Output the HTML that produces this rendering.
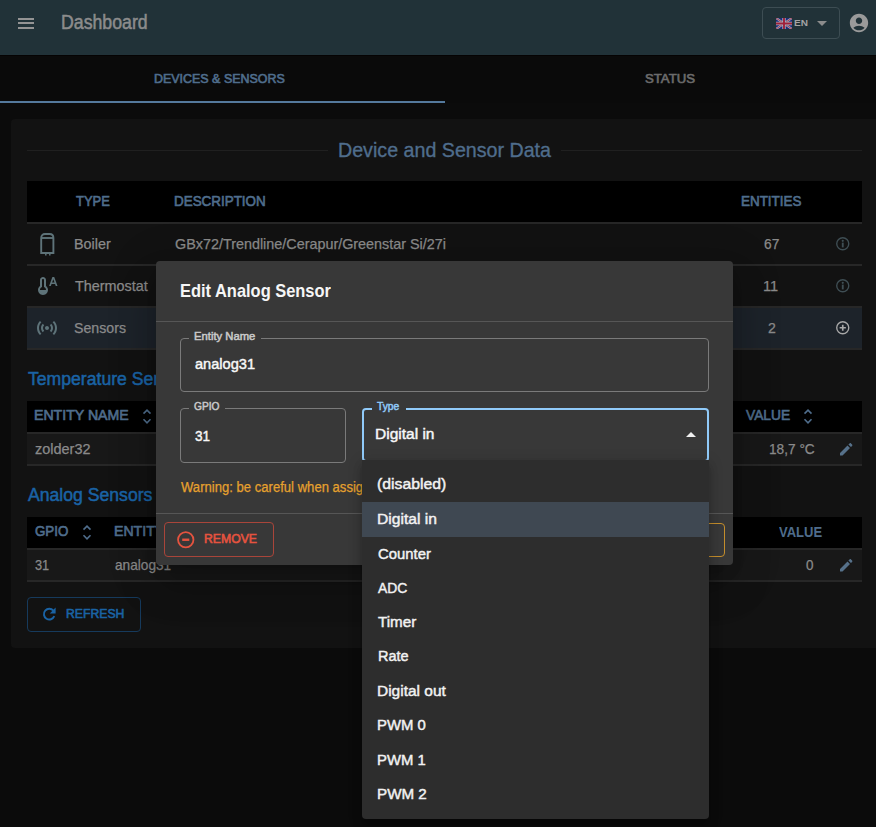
<!DOCTYPE html>
<html><head><meta charset="utf-8">
<style>
*{box-sizing:border-box;margin:0;padding:0}
html,body{width:876px;height:827px;overflow:hidden;background:#0b0b0b;font-family:"Liberation Sans",sans-serif;}
.abs{position:absolute}
.t{position:absolute;white-space:nowrap;line-height:1;transform-origin:0 0}
svg{position:absolute;overflow:visible}
</style></head><body>
<!-- header -->
<div class="abs" style="left:0;top:0;width:876px;height:55px;background:#213238"></div>
<div class="abs" style="left:18px;top:17.5px;width:16.4px;height:2px;background:#949494"></div>
<div class="abs" style="left:18px;top:22px;width:16.4px;height:2px;background:#949494"></div>
<div class="abs" style="left:18px;top:26.5px;width:16.4px;height:2px;background:#949494"></div>
<span class="t" style="left:60.69px;top:13px;font-size:19.5px;color:#8c8c8c;-webkit-text-stroke:0.5px currentColor;transform:scaleX(0.9085)">Dashboard</span>
<div class="abs" style="left:762px;top:7px;width:78px;height:32px;border:1px solid #3d4d53;border-radius:4px"></div>
<svg style="left:776px;top:18px;overflow:hidden" width="16" height="11" viewBox="0 0 16 11">
  <rect width="16" height="11" fill="#1b2a78"/>
  <path d="M0 0L16 11M16 0L0 11" stroke="#a9adbd" stroke-width="2.2"/>
  <path d="M0 0L16 11M16 0L0 11" stroke="#a0203a" stroke-width="0.8"/>
  <path d="M8 0V11M0 5.5H16" stroke="#a9adbd" stroke-width="3.4"/>
  <path d="M8 0V11M0 5.5H16" stroke="#a0203a" stroke-width="1.9"/>
</svg>
<span class="t" style="left:794.27px;top:18px;font-size:9.8px;color:#a4a4a4;font-weight:bold;transform:scaleX(1.0250)">EN</span>
<svg style="left:816.5px;top:21px" width="10" height="5" viewBox="0 0 10 5"><path d="M0 0H10L5 5Z" fill="#8c8c8c"/></svg>
<svg style="left:848px;top:12px" width="22" height="22" viewBox="0 0 24 24"><path fill="#9a9a9a" d="M12 2C6.48 2 2 6.48 2 12s4.48 10 10 10 10-4.48 10-10S17.52 2 12 2zm0 4c1.93 0 3.5 1.57 3.5 3.5S13.93 13 12 13s-3.5-1.57-3.5-3.5S10.07 6 12 6zm0 14c-2.03 0-4.43-.82-6.14-2.88C7.55 15.8 9.68 15 12 15s4.45.8 6.14 2.12C16.43 19.18 14.03 20 12 20z"/></svg>

<!-- tabs -->
<div class="abs" style="left:0;top:55px;width:876px;height:48px;background:#0a0a0a"></div>
<div class="abs" style="left:0;top:55px;width:876px;height:1px;background:#050303"></div>
<span class="t" style="left:154.04px;top:72px;font-size:13px;color:#4f6d8c;-webkit-text-stroke:0.65px currentColor;transform:scaleX(0.9578)">DEVICES &amp; SENSORS</span>
<span class="t" style="left:644.50px;top:72px;font-size:13px;color:#6b6b6b;-webkit-text-stroke:0.65px currentColor;transform:scaleX(1.0122)">STATUS</span>
<div class="abs" style="left:0;top:101px;width:445px;height:2px;background:#54799c"></div>

<!-- card -->
<div class="abs" style="left:11px;top:119px;width:880px;height:529px;background:#121212;border-radius:4px"></div>
<div class="abs" style="left:27px;top:150px;width:300.5px;height:1px;background:#202020"></div>
<div class="abs" style="left:561px;top:150px;width:301px;height:1px;background:#202020"></div>
<span class="t" style="left:337.53px;top:140px;font-size:20.3px;color:#4f6d8c;-webkit-text-stroke:0.35px currentColor;transform:scaleX(0.9689)">Device and Sensor Data</span>

<!-- device table -->
<div class="abs" style="left:27px;top:181px;width:835px;height:41px;background:#000"></div>
<div class="abs" style="left:27px;top:222px;width:835px;height:2px;background:#272727"></div>
<span class="t" style="left:75.60px;top:194px;font-size:14.5px;color:#4f6d8c;-webkit-text-stroke:0.65px currentColor;transform:scaleX(0.8921)">TYPE</span><span class="t" style="left:174.07px;top:194px;font-size:14.5px;color:#4f6d8c;-webkit-text-stroke:0.65px currentColor;transform:scaleX(0.9258)">DESCRIPTION</span><span class="t" style="left:741.37px;top:194px;font-size:14.5px;color:#4f6d8c;-webkit-text-stroke:0.65px currentColor;transform:scaleX(0.9266)">ENTITIES</span>
<span class="t" style="left:74.11px;top:237px;font-size:14.5px;color:#8a8a8a;-webkit-text-stroke:0.25px currentColor;transform:scaleX(0.9889)">Boiler</span><span class="t" style="left:175.00px;top:237px;font-size:14.5px;color:#8a8a8a;-webkit-text-stroke:0.25px currentColor;transform:scaleX(0.9908)">GBx72/Trendline/Cerapur/Greenstar Si/27i</span><span class="t" style="left:764.30px;top:237px;font-size:14.5px;color:#8a8a8a;-webkit-text-stroke:0.25px currentColor;transform:scaleX(0.9500)">67</span>
<div class="abs" style="left:27px;top:264px;width:835px;height:2px;background:#272727"></div>
<span class="t" style="left:75.40px;top:279px;font-size:14.5px;color:#8a8a8a;-webkit-text-stroke:0.25px currentColor;transform:scaleX(0.9919)">Thermostat</span><span class="t" style="left:763.49px;top:279px;font-size:14.5px;color:#8a8a8a;-webkit-text-stroke:0.25px currentColor;transform:scaleX(1.0071)">11</span>
<div class="abs" style="left:27px;top:306px;width:835px;height:1.5px;background:#272727"></div>
<div class="abs" style="left:27px;top:307.5px;width:835px;height:40.5px;background:#1d232a"></div>
<span class="t" style="left:74.42px;top:321px;font-size:14.5px;color:#8a8a8a;-webkit-text-stroke:0.25px currentColor;transform:scaleX(0.9769)">Sensors</span><span class="t" style="left:768.20px;top:321px;font-size:14.5px;color:#8a8a8a;-webkit-text-stroke:0.25px currentColor;transform:scaleX(0.9750)">2</span>
<div class="abs" style="left:27px;top:348px;width:835px;height:1.5px;background:#272727"></div>
<!-- device icons -->
<svg style="left:39.5px;top:232.5px" width="15" height="23" viewBox="0 0 15 23">
  <path d="M1.2 20V5C1.2 2.6 2.7 1 5 1H9.6C11.9 1 13.4 2.6 13.4 5V20Z" fill="none" stroke="#5e7379" stroke-width="1.9"/>
  <path d="M1.2 5H13.4" stroke="#5e7379" stroke-width="1.9"/>
  <path d="M5.8 20V22.5M9.8 20V22.5" stroke="#5e7379" stroke-width="1.5"/>
</svg>
<svg style="left:35px;top:274px" width="24" height="24" viewBox="0 0 24 24"><path fill="#5e7379" d="M11 12V6c0-1.66-1.34-3-3-3S5 4.34 5 6v6c-1.21.91-2 2.37-2 4 0 1.12.38 2.14 1 2.97V19h.02c.91 1.21 2.35 2 3.98 2s3.06-.79 3.98-2H12v-.03c.62-.83 1-1.85 1-2.97 0-1.63-.79-3.09-2-4zm-6 4c0-.94.45-1.84 1.2-2.4L7 13V6c0-.55.45-1 1-1s1 .45 1 1v7l.8.6c.75.57 1.2 1.46 1.2 2.4H5zM18.62 3h-1.24L14.1 12h1.73l.73-2h3.48l.73 2h1.73l-3.28-9zm-1.52 5.5 1.21-3.33 1.21 3.33H17.1z"/></svg>
<svg style="left:35px;top:316px" width="24" height="24" viewBox="0 0 24 24"><path fill="#5e7379" d="M7.76 16.24C6.67 15.16 6 13.66 6 12s.67-3.16 1.76-4.24l1.42 1.42C8.45 9.9 8 10.9 8 12c0 1.1.45 2.1 1.17 2.83l-1.41 1.41zm8.48 0C17.33 15.16 18 13.66 18 12s-.67-3.16-1.760-4.24l-1.42 1.42C15.55 9.9 16 10.9 16 12c0 1.1-.45 2.1-1.17 2.830l1.41 1.41zM12 10c-1.1 0-2 .9-2 2s.9 2 2 2 2-.9 2-2-.9-2-2-2zm8 2c0 2.21-.9 4.21-2.35 5.65l1.42 1.42C20.88 17.26 22 14.76 22 12s-1.12-5.26-2.93-7.07l-1.42 1.42C19.1 7.79 20 9.79 20 12zM6.35 6.35L4.93 4.93C3.12 6.74 2 9.24 2 12s1.12 5.26 2.93 7.07l1.42-1.42C4.9 16.21 4 14.21 4 12s.9-4.21 2.35-5.65z"/></svg>
<svg style="left:836px;top:237.2px" width="13.5" height="13.5" viewBox="0 0 13 13"><circle cx="6.5" cy="6.5" r="5.8" fill="none" stroke="#3f4e54" stroke-width="1.3"/><path d="M6.5 5.4V10" stroke="#3f4e54" stroke-width="1.8"/><circle cx="6.5" cy="3.7" r="1.05" fill="#3f4e54"/></svg>
<svg style="left:836px;top:279.2px" width="13.5" height="13.5" viewBox="0 0 13 13"><circle cx="6.5" cy="6.5" r="5.8" fill="none" stroke="#3f4e54" stroke-width="1.3"/><path d="M6.5 5.4V10" stroke="#3f4e54" stroke-width="1.8"/><circle cx="6.5" cy="3.7" r="1.05" fill="#3f4e54"/></svg>
<svg style="left:836px;top:321.3px" width="13.5" height="13.5" viewBox="0 0 13 13"><circle cx="6.5" cy="6.5" r="5.8" fill="none" stroke="#a8a8a8" stroke-width="1.3"/><path d="M6.5 3.5V9.5M3.5 6.5H9.5" stroke="#a8a8a8" stroke-width="1.6"/></svg>

<!-- temperature sensors -->
<span class="t" style="left:27.70px;top:371px;font-size:17.5px;color:#1a63a5;-webkit-text-stroke:0.5px currentColor;transform:scaleX(1.0065)">Temperature Sensors</span>
<div class="abs" style="left:27px;top:401px;width:835px;height:31px;background:#000"></div>
<div class="abs" style="left:27px;top:432px;width:835px;height:1.5px;background:#272727"></div>
<div class="abs" style="left:27px;top:433.5px;width:835px;height:30.5px;background:#181818"></div>
<div class="abs" style="left:27px;top:464px;width:835px;height:1.5px;background:#272727"></div>
<span class="t" style="left:34.40px;top:408px;font-size:14.2px;color:#4f6d8c;-webkit-text-stroke:0.65px currentColor;transform:scaleX(0.9957)">ENTITY NAME</span><span class="t" style="left:746.10px;top:408px;font-size:14.2px;color:#4f6d8c;-webkit-text-stroke:0.65px currentColor;transform:scaleX(0.9689)">VALUE</span><span class="t" style="left:35.00px;top:442px;font-size:14.5px;color:#8a8a8a;-webkit-text-stroke:0.25px currentColor;transform:scaleX(0.9982)">zolder32</span><span class="t" style="left:769.16px;top:442px;font-size:14.5px;color:#8a8a8a;-webkit-text-stroke:0.25px currentColor;transform:scaleX(0.9426)">18,7 °C</span>
<svg style="left:143px;top:409px" width="8" height="15" viewBox="0 0 8 15"><path d="M0.5 4.6L4 1.1L7.5 4.6M0.5 10.3L4 13.8L7.5 10.3" fill="none" stroke="#4f6d8c" stroke-width="1.6"/></svg>
<svg style="left:804px;top:409px" width="8" height="15" viewBox="0 0 8 15"><path d="M0.5 4.6L4 1.1L7.5 4.6M0.5 10.3L4 13.8L7.5 10.3" fill="none" stroke="#4f6d8c" stroke-width="1.6"/></svg>
<svg style="left:840px;top:443px" width="12.5" height="12.5" viewBox="0 0 12.5 12.5"><path d="M0 10V12.5H2.5L10 5L7.5 2.5Z M8.4 1.6L9.6 0.4C10 0 10.6 0 11 0.4L12.1 1.5C12.5 1.9 12.5 2.5 12.1 2.9L10.9 4.1Z" fill="#56718a"/></svg>

<!-- analog sensors -->
<span class="t" style="left:27.70px;top:487px;font-size:17.5px;color:#1a63a5;-webkit-text-stroke:0.5px currentColor;transform:scaleX(1.0065)">Analog Sensors</span>
<div class="abs" style="left:27px;top:517px;width:835px;height:31px;background:#000"></div>
<div class="abs" style="left:27px;top:548px;width:835px;height:1.5px;background:#272727"></div>
<div class="abs" style="left:27px;top:549.5px;width:835px;height:30.5px;background:#181818"></div>
<div class="abs" style="left:27px;top:580px;width:835px;height:1.5px;background:#272727"></div>
<span class="t" style="left:35.40px;top:524px;font-size:14.2px;color:#4f6d8c;-webkit-text-stroke:0.65px currentColor;transform:scaleX(0.9400)">GPIO</span><span class="t" style="left:114.40px;top:524px;font-size:14.2px;color:#4f6d8c;-webkit-text-stroke:0.65px currentColor;transform:scaleX(0.9957)">ENTITY</span><span class="t" style="left:778.90px;top:525px;font-size:14.2px;color:#4f6d8c;font-weight:bold;transform:scaleX(0.9170)">VALUE</span><span class="t" style="left:35.40px;top:558px;font-size:14.5px;color:#8a8a8a;-webkit-text-stroke:0.25px currentColor;transform:scaleX(0.8813)">31</span><span class="t" style="left:115.40px;top:558px;font-size:14.5px;color:#8a8a8a;-webkit-text-stroke:0.25px currentColor;transform:scaleX(0.9422)">analog31</span><span class="t" style="left:806.20px;top:558px;font-size:14.5px;color:#8a8a8a;-webkit-text-stroke:0.25px currentColor;transform:scaleX(0.9250)">0</span>
<svg style="left:83px;top:525px" width="8" height="15" viewBox="0 0 8 15"><path d="M0.5 4.6L4 1.1L7.5 4.6M0.5 10.3L4 13.8L7.5 10.3" fill="none" stroke="#4f6d8c" stroke-width="1.6"/></svg>
<svg style="left:840px;top:559px" width="12.5" height="12.5" viewBox="0 0 12.5 12.5"><path d="M0 10V12.5H2.5L10 5L7.5 2.5Z M8.4 1.6L9.6 0.4C10 0 10.6 0 11 0.4L12.1 1.5C12.5 1.9 12.5 2.5 12.1 2.9L10.9 4.1Z" fill="#56718a"/></svg>

<!-- refresh -->
<div class="abs" style="left:27px;top:597px;width:114px;height:35px;border:1px solid #163a5c;border-radius:4px"></div>
<svg style="left:42px;top:607px" width="14" height="14" viewBox="0 0 14 14"><path d="M11.4 3.6A5.4 5.4 0 1 0 12.3 9.2" fill="none" stroke="#1a63a5" stroke-width="1.9"/><path d="M13.6 0.6V6.4H7.8Z" fill="#1a63a5"/></svg>
<span class="t" style="left:66.28px;top:607px;font-size:13.3px;color:#1a63a5;-webkit-text-stroke:0.65px currentColor;transform:scaleX(0.9194)">REFRESH</span>

<!-- dialog -->
<div class="abs" style="left:156px;top:261px;width:577px;height:304px;background:#383838;border-radius:4px;box-shadow:0 11px 15px -7px rgba(0,0,0,0.2),0 24px 38px 3px rgba(0,0,0,0.14),0 9px 46px 8px rgba(0,0,0,0.12)"></div>
<span class="t" style="left:179.81px;top:282px;font-size:18.5px;color:#f6f6f6;font-weight:bold;transform:scaleX(0.8882)">Edit Analog Sensor</span>
<div class="abs" style="left:156px;top:321px;width:577px;height:1px;background:#565656"></div>
<div class="abs" style="left:180px;top:338px;width:529px;height:53.5px;border:1px solid #7a7a7a;border-radius:4px"></div>
<div class="abs" style="left:189px;top:334px;width:71.5px;height:8px;background:#383838"></div>
<span class="t" style="left:193.80px;top:331px;font-size:10.8px;color:#c9c9c9;-webkit-text-stroke:0.5px currentColor;transform:scaleX(1.0424)">Entity Name</span><span class="t" style="left:194.60px;top:356px;font-size:15.5px;color:#f8f8f8;-webkit-text-stroke:0.45px currentColor;transform:scaleX(0.9422)">analog31</span>
<div class="abs" style="left:180px;top:408px;width:166px;height:54.5px;border:1px solid #7a7a7a;border-radius:4px"></div>
<div class="abs" style="left:189px;top:404px;width:36px;height:8px;background:#383838"></div>
<span class="t" style="left:193.80px;top:401px;font-size:10.8px;color:#c9c9c9;-webkit-text-stroke:0.5px currentColor;transform:scaleX(0.9444)">GPIO</span><span class="t" style="left:194.60px;top:428px;font-size:15.5px;color:#f8f8f8;-webkit-text-stroke:0.45px currentColor;transform:scaleX(0.8765)">31</span>
<div class="abs" style="left:362px;top:408px;width:347px;height:54px;border:2px solid #90caf9;border-radius:4px"></div>
<div class="abs" style="left:372px;top:404px;width:34px;height:8px;background:#383838"></div>
<span class="t" style="left:376.70px;top:401px;font-size:10.8px;color:#90caf9;-webkit-text-stroke:0.5px currentColor;transform:scaleX(0.9500)">Type</span><span class="t" style="left:375.08px;top:426px;font-size:15.2px;color:#f8f8f8;-webkit-text-stroke:0.45px currentColor;transform:scaleX(1.0211)">Digital in</span>
<svg style="left:686px;top:432px" width="10" height="5" viewBox="0 0 10 5"><path d="M0 5H10L5 0Z" fill="#f0f0f0"/></svg>
<span class="t" style="left:181.00px;top:480px;font-size:14px;color:#e6a12e;-webkit-text-stroke:0.25px currentColor;transform:scaleX(0.9350)">Warning: be careful when assigning a GPIO!</span>
<div class="abs" style="left:156px;top:513px;width:577px;height:1px;background:#565656"></div>
<div class="abs" style="left:164px;top:521.8px;width:110px;height:35.2px;border:1px solid #a9453a;border-radius:4px"></div>
<svg style="left:177px;top:531px" width="17.5" height="17.5" viewBox="0 0 17.5 17.5"><circle cx="8.75" cy="8.75" r="7.7" fill="none" stroke="#e5533f" stroke-width="1.8"/><path d="M5.2 8.75H12.3" stroke="#e5533f" stroke-width="2.4"/></svg>
<span class="t" style="left:203.79px;top:532px;font-size:13.5px;color:#e5533f;-webkit-text-stroke:0.65px currentColor;transform:scaleX(0.9052)">REMOVE</span>
<div class="abs" style="left:600px;top:522.5px;width:124.5px;height:34.5px;border:1px solid #c38d2c;border-radius:4px"></div>

<!-- menu -->
<div class="abs" style="left:362px;top:460px;width:347px;height:358.5px;background:#2d2d2d;border-radius:0 0 4px 4px;box-shadow:0 5px 5px -3px rgba(0,0,0,0.2),0 8px 10px 1px rgba(0,0,0,0.14),0 3px 14px 2px rgba(0,0,0,0.12)"></div>
<div class="abs" style="left:362px;top:502px;width:347px;height:34.7px;background:#3f4852"></div>
<span class="t" style="left:376.86px;top:476px;font-size:15.2px;color:#f2f2f2;-webkit-text-stroke:0.45px currentColor;transform:scaleX(1.0385)">(disabled)</span><span class="t" style="left:376.97px;top:511px;font-size:15.2px;color:#f2f2f2;-webkit-text-stroke:0.45px currentColor;transform:scaleX(1.0298)">Digital in</span><span class="t" style="left:378.00px;top:546px;font-size:15.2px;color:#f2f2f2;-webkit-text-stroke:0.45px currentColor;transform:scaleX(0.9778)">Counter</span><span class="t" style="left:378.00px;top:580px;font-size:15.2px;color:#f2f2f2;-webkit-text-stroke:0.45px currentColor;transform:scaleX(0.9156)">ADC</span><span class="t" style="left:378.00px;top:614px;font-size:15.2px;color:#f2f2f2;-webkit-text-stroke:0.45px currentColor;transform:scaleX(1.0000)">Timer</span><span class="t" style="left:377.55px;top:648px;font-size:15.2px;color:#f2f2f2;-webkit-text-stroke:0.45px currentColor;transform:scaleX(0.9548)">Rate</span><span class="t" style="left:376.98px;top:683px;font-size:15.2px;color:#f2f2f2;-webkit-text-stroke:0.45px currentColor;transform:scaleX(1.0194)">Digital out</span><span class="t" style="left:377.02px;top:717px;font-size:15.2px;color:#f2f2f2;-webkit-text-stroke:0.45px currentColor;transform:scaleX(0.9796)">PWM 0</span><span class="t" style="left:377.02px;top:752px;font-size:15.2px;color:#f2f2f2;-webkit-text-stroke:0.45px currentColor;transform:scaleX(0.9771)">PWM 1</span><span class="t" style="left:377.00px;top:786px;font-size:15.2px;color:#f2f2f2;-webkit-text-stroke:0.45px currentColor;transform:scaleX(1.0000)">PWM 2</span>
</body></html>
